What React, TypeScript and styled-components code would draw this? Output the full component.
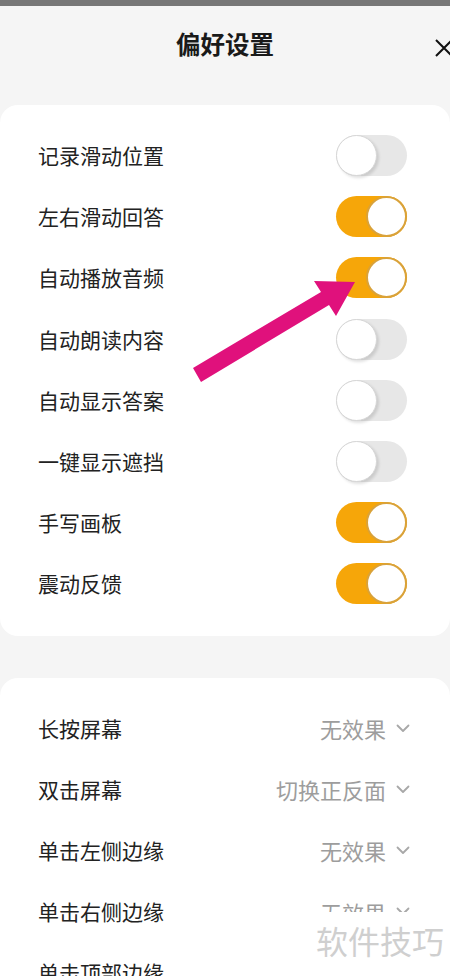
import React from "react";
import styled, { createGlobalStyle } from "styled-components";

const Global = createGlobalStyle`
  html, body { margin: 0; padding: 0; }
  body {
    background: #f5f5f5;
    font-family: "Noto Sans CJK SC", "Noto Sans", sans-serif;
    overflow: hidden;
  }
`;

const Page = styled.div`
  position: relative;
  width: 450px;
  height: 976px;
  overflow: hidden;
  background: #f5f5f5;
  display: flex;
  flex-direction: column;
`;

const TopBar = styled.div`
  height: 6px;
  background: #777777;
  flex-shrink: 0;
`;

const Header = styled.div`
  height: 99px;
  flex-shrink: 0;
  display: grid;
  grid-template-columns: 1fr auto 1fr;
  align-items: start;
  padding-top: 24px;
  box-sizing: border-box;
`;

const Title = styled.div`
  grid-column: 2;
  font-size: 24.5px;
  font-weight: 700;
  color: #1a1a1a;
  line-height: 28px;
`;

const Close = styled.div`
  grid-column: 3;
  justify-self: end;
  margin-right: -4px;
  margin-top: 8px;
  width: 20px;
  height: 20px;
  display: flex;
`;

const Card = styled.div`
  background: #ffffff;
  border-radius: 18px;
  padding: 20px 0 21px;
  flex-shrink: 0;
  display: flex;
  flex-direction: column;
`;

const Gap = styled.div`
  height: 42px;
  flex-shrink: 0;
`;

const Row = styled.div<{ $right: number }>`
  height: 61.2px;
  display: flex;
  align-items: center;
  justify-content: space-between;
  padding: 0 ${(p) => p.$right}px 0 38px;
`;

const Label = styled.span`
  font-size: 21px;
  color: #222222;
  line-height: 1;
`;

const Value = styled.span`
  display: flex;
  align-items: center;
  gap: 10px;
  font-size: 22px;
  color: #9d9d9d;
  line-height: 1;
`;

const Track = styled.div<{ $on: boolean }>`
  width: 71px;
  height: 41px;
  border-radius: 21px;
  box-sizing: border-box;
  background: ${(p) => (p.$on ? "#f6a609" : "#e7e7e7")};
  display: flex;
  justify-content: ${(p) => (p.$on ? "flex-end" : "flex-start")};
  align-items: center;
`;

const Knob = styled.div<{ $on: boolean }>`
  width: 41px;
  height: 41px;
  border-radius: 50%;
  box-sizing: border-box;
  background: #ffffff;
  border: ${(p) => (p.$on ? "2px solid #d9a23a" : "1px solid #d6d6d6")};
  box-shadow: ${(p) => (p.$on ? "none" : "2px 2px 3px rgba(0,0,0,0.12)")};
`;

const Arrow = styled.svg`
  position: absolute;
  left: 0;
  top: 0;
  pointer-events: none;
`;

const Watermark = styled.div`
  position: absolute;
  right: 0;
  top: 912px;
  width: 150px;
  height: 64px;
  background: #ffffff;
  display: flex;
  align-items: flex-start;
  justify-content: flex-end;
  padding-right: 6px;
  box-sizing: border-box;
  font-size: 32px;
  color: #cfcfcf;
  line-height: 1;
  padding-top: 12px;
`;

const Toggle = ({ on }: { on: boolean }) => (
  <Track $on={on}>
    <Knob $on={on} />
  </Track>
);

const Chevron = () => (
  <svg width="14" height="9" viewBox="0 0 14 9">
    <path d="M1.5 1.5 L7 7 L12.5 1.5" fill="none" stroke="#a8a8a8" strokeWidth="1.8" strokeLinecap="round" strokeLinejoin="round" />
  </svg>
);

const toggles: [string, boolean][] = [
  ["记录滑动位置", false],
  ["左右滑动回答", true],
  ["自动播放音频", true],
  ["自动朗读内容", false],
  ["自动显示答案", false],
  ["一键显示遮挡", false],
  ["手写画板", true],
  ["震动反馈", true],
];

const selects: [string, string][] = [
  ["长按屏幕", "无效果"],
  ["双击屏幕", "切换正反面"],
  ["单击左侧边缘", "无效果"],
  ["单击右侧边缘", "无效果"],
  ["单击顶部边缘", "无效果"],
];

export default function App() {
  return (
    <>
      <Global />
      <Page>
        <TopBar />
        <Header>
          <Title>偏好设置</Title>
          <Close>
            <svg width="20" height="20" viewBox="0 0 20 20">
              <path d="M2 2 L18 18 M18 2 L2 18" stroke="#111" strokeWidth="2" fill="none" />
            </svg>
          </Close>
        </Header>
        <Card>
          {toggles.map(([t, on]) => (
            <Row key={t} $right={43}>
              <Label>{t}</Label>
              <Toggle on={on} />
            </Row>
          ))}
        </Card>
        <Gap />
        <Card>
          {selects.map(([t, v]) => (
            <Row key={t} $right={40}>
              <Label>{t}</Label>
              <Value>
                {v}
                <Chevron />
              </Value>
            </Row>
          ))}
        </Card>
        <Arrow width="450" height="976" viewBox="0 0 450 976">
          <polygon
            points="193,368 321,292 314,281 355,282 336,316 329,305 201,382"
            fill="#e0117c"
          />
        </Arrow>
        <Watermark>软件技巧</Watermark>
      </Page>
    </>
  );
}
